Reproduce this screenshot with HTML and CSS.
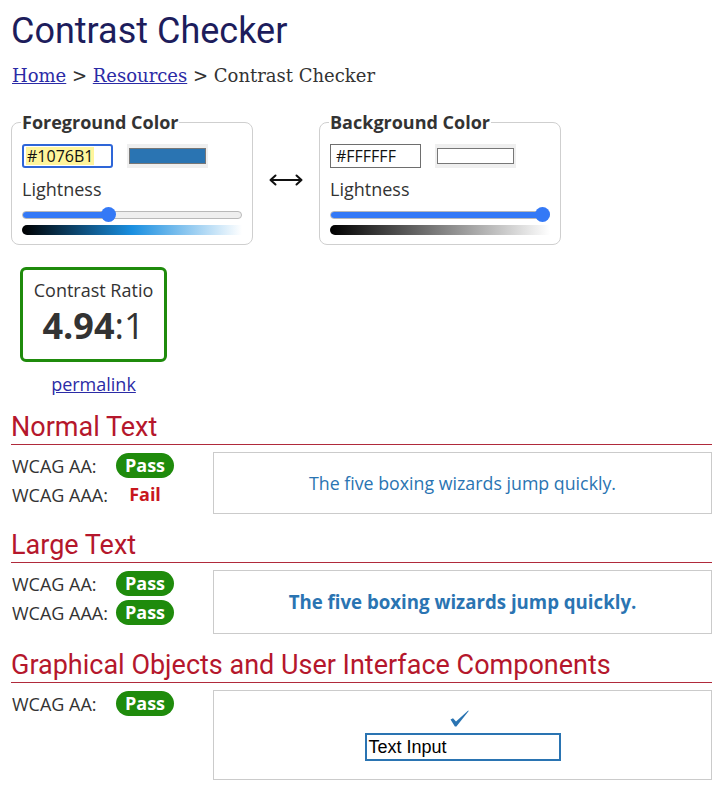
FILE: index.html
```html
<!DOCTYPE html>
<html lang="en">
<head>
<meta charset="utf-8">
<title>Contrast Checker</title>
<link rel="stylesheet" href="styles.css">
</head>
<body>
<div class="page">
  <h1 class="title">Contrast Checker</h1>
  <nav class="crumbs"><a href="#">Home</a> &gt; <a href="#">Resources</a> &gt; Contrast Checker</nav>

  <div class="pickers">
    <fieldset class="picker">
      <legend class="picker-legend">Foreground Color</legend>
      <div class="inputs">
        <span class="hex hex-focus"><span class="hex-sel">#1076B1</span></span>
        <span class="swatch"><span class="swatch-fill swatch-fg"></span></span>
      </div>
      <div class="picker-label">Lightness</div>
      <div class="slider">
        <div class="track"><div class="track-fill" style="width:86px"></div></div>
        <div class="thumb" style="left:79px"></div>
      </div>
      <div class="grad grad-fg"></div>
    </fieldset>

    <svg class="swap" width="34" height="12" viewBox="0 0 34 12" aria-hidden="true">
      <path d="M1.5 6H32.5M6.5 1.5L1.5 6L6.5 10.5M27.5 1.5L32.5 6L27.5 10.5" fill="none" stroke="#111" stroke-width="2" stroke-linecap="round" stroke-linejoin="round"/>
    </svg>

    <fieldset class="picker">
      <legend class="picker-legend">Background Color</legend>
      <div class="inputs">
        <span class="hex">#FFFFFF</span>
        <span class="swatch"><span class="swatch-fill swatch-bg"></span></span>
      </div>
      <div class="picker-label">Lightness</div>
      <div class="slider">
        <div class="track"><div class="track-fill" style="width:100%"></div></div>
        <div class="thumb" style="left:205px"></div>
      </div>
      <div class="grad grad-bg"></div>
    </fieldset>
  </div>

  <div class="ratio-wrap">
    <div class="ratio">
      <div class="ratio-label">Contrast Ratio</div>
      <div class="ratio-value"><b>4.94</b>:1</div>
    </div>
    <a class="permalink" href="#">permalink</a>
  </div>

  <section class="result">
    <h2 class="result-title">Normal Text</h2>
    <div class="result-body">
      <div class="checks">
        <div class="check-row"><span class="check-label">WCAG AA:</span><span class="badge">Pass</span></div>
        <div class="check-row"><span class="check-label">WCAG AAA:</span><span class="fail">Fail</span></div>
      </div>
      <div class="sample sample-normal">The five boxing wizards jump quickly.</div>
    </div>
  </section>

  <section class="result">
    <h2 class="result-title">Large Text</h2>
    <div class="result-body">
      <div class="checks">
        <div class="check-row"><span class="check-label">WCAG AA:</span><span class="badge">Pass</span></div>
        <div class="check-row"><span class="check-label">WCAG AAA:</span><span class="badge">Pass</span></div>
      </div>
      <div class="sample sample-large">The five boxing wizards jump quickly.</div>
    </div>
  </section>

  <section class="result">
    <h2 class="result-title">Graphical Objects and User Interface Components</h2>
    <div class="result-body">
      <div class="checks">
        <div class="check-row"><span class="check-label">WCAG AA:</span><span class="badge">Pass</span></div>
      </div>
      <div class="sample sample-ui">
        <svg class="tick" width="19" height="17" viewBox="0 0 19 17" aria-hidden="true">
          <path d="M0.5 9.6L3 8.2L6 11.6L18.2 0.6L18.7 1.1L6.4 16.4L4.9 16.4Z" fill="#2a74b2"/>
        </svg>
        <span class="text-input">Text Input</span>
      </div>
    </div>
  </section>
</div>
</body>
</html>
```

FILE: styles.css
```css
html, body {
  margin: 0;
  padding: 0;
  background: #fff;
}

body {
  font-family: "Open Sans", "DejaVu Sans", sans-serif;
  font-size: 18px;
  color: #333;
}

.page {
  width: 701px;
  padding-left: 11px;
}

.title {
  font-family: Roboto, "Liberation Sans", sans-serif;
  font-weight: 400;
  font-size: 36px;
  line-height: 43px;
  color: #1d1d5c;
  margin: 10px 0 0 0;
}

.crumbs {
  font-family: "DejaVu Serif", "Liberation Serif", serif;
  font-size: 18px;
  line-height: 24px;
  color: #333;
  margin-top: 11px;
  padding-left: 1px;
}

.crumbs a, .permalink {
  color: #2b2ba6;
  text-decoration: underline;
}

.pickers {
  display: flex;
  align-items: center;
  margin-top: 22px;
}

.picker {
  width: 220px;
  margin: 0;
  padding: 10px 10px 9px 10px;
  border: 1px solid #cfcfcf;
  border-radius: 8px;
}

.picker-legend {
  font-weight: 700;
  font-size: 18px;
  line-height: normal;
  padding: 0 1px;
  margin-left: -1px;
  color: #333;
}

.inputs {
  display: flex;
  align-items: center;
  height: 24px;
}

.hex {
  box-sizing: border-box;
  width: 91px;
  height: 24px;
  border: 1px solid #6e6e6e;
  font-size: 16px;
  line-height: 22px;
  padding-left: 5px;
  color: #111;
}

.hex-focus {
  border: 2px solid #2e66d8;
  border-radius: 3px;
  padding-left: 2px;
  line-height: 20px;
}

.hex-sel {
  background: #fff59c;
  display: inline-block;
  line-height: 18px;
  padding: 0 1px;
}

.swatch {
  box-sizing: border-box;
  margin-left: 14px;
  width: 81px;
  height: 24px;
  background: #efefef;
  padding: 4px 2px;
  display: flex;
}

.swatch-fill {
  flex: 1;
  border: 1px solid #777;
}

.swatch-fg {
  background: #2a74b2;
}

.swatch-bg {
  background: #fff;
}

.picker-label {
  line-height: 24px;
  margin-top: 9px;
}

.slider {
  position: relative;
  height: 16px;
  margin-top: 6px;
}

.track {
  position: relative;
  top: 4px;
  height: 8px;
  box-sizing: border-box;
  border: 1px solid #b9b9b9;
  border-radius: 4px;
  background: #efefef;
  overflow: hidden;
}

.track-fill {
  height: 100%;
  margin: -1px 0 0 -1px;
  padding-bottom: 2px;
  background: #3479f6;
  border-radius: 4px;
}

.thumb {
  position: absolute;
  top: 0;
  width: 15px;
  height: 15px;
  border-radius: 50%;
  background: #3479f6;
}

.grad {
  height: 10px;
  margin-top: 2px;
  border-radius: 5px 0 0 5px;
}

.grad-fg {
  background: linear-gradient(to right, #000 0%, #1a8fe0 50%, #fff 100%);
}

.grad-bg {
  background: linear-gradient(to right, #000 0%, #fff 100%);
}

.swap {
  display: block;
  margin: 5px 16px 0 16px;
}

.ratio-wrap {
  display: inline-flex;
  flex-direction: column;
  align-items: center;
  margin: 22px 0 0 9px;
}

.ratio {
  box-sizing: border-box;
  width: 147px;
  height: 95px;
  border: 3px solid #1f8b0c;
  border-radius: 6px;
  text-align: center;
  padding-top: 8px;
}

.ratio-label {
  font-size: 18px;
  line-height: 24px;
}

.ratio-value {
  font-size: 36px;
  line-height: 44px;
  margin-top: 2px;
}

.ratio-value b {
  font-weight: 700;
}

.permalink {
  display: block;
  line-height: 24px;
  margin-top: 10px;
}

.result {
  margin-top: 15px;
}

.result-title {
  font-family: Roboto, "Liberation Sans", sans-serif;
  font-weight: 400;
  font-size: 27px;
  line-height: 32px;
  color: #b5172c;
  margin: 0;
  padding-bottom: 1px;
  border-bottom: 1px solid #b02a3b;
}

.result-body {
  display: flex;
  align-items: flex-start;
  margin-top: 7px;
}

.checks {
  flex: 0 0 202px;
  display: flex;
  flex-direction: column;
  gap: 4px;
  padding-top: 1px;
}

.check-row {
  display: flex;
  align-items: center;
  height: 25px;
}

.check-label {
  width: 105px;
  padding-left: 1px;
  box-sizing: border-box;
}

.badge, .fail {
  width: 58px;
  height: 25px;
  line-height: 25px;
  text-align: center;
  font-weight: 700;
  font-size: 18px;
}

.badge {
  background: #1f8b0c;
  color: #fff;
  border-radius: 13px;
}

.fail {
  color: #c8171d;
}

.sample {
  flex: 1;
  border: 1px solid #cbcbcb;
  text-align: center;
  color: #2a74b2;
}

.sample-normal {
  padding: 18px 0;
  line-height: 24px;
  font-size: 17.8px;
}

.sample-large {
  padding: 18px 0;
  line-height: 26px;
  font-size: 18.67px;
  font-weight: 700;
}

.sample-ui {
  display: flex;
  flex-direction: column;
  align-items: center;
  padding: 19px 0 18px 0;
}

.tick {
  display: block;
  margin-left: -6px;
}

.text-input {
  box-sizing: border-box;
  width: 196px;
  height: 28px;
  margin-top: 6px;
  border: 2px solid #2a74b2;
  font-family: "Liberation Sans", Arial, sans-serif;
  font-size: 18px;
  line-height: 24px;
  color: #000;
  text-align: left;
  padding-left: 2px;
}
```
